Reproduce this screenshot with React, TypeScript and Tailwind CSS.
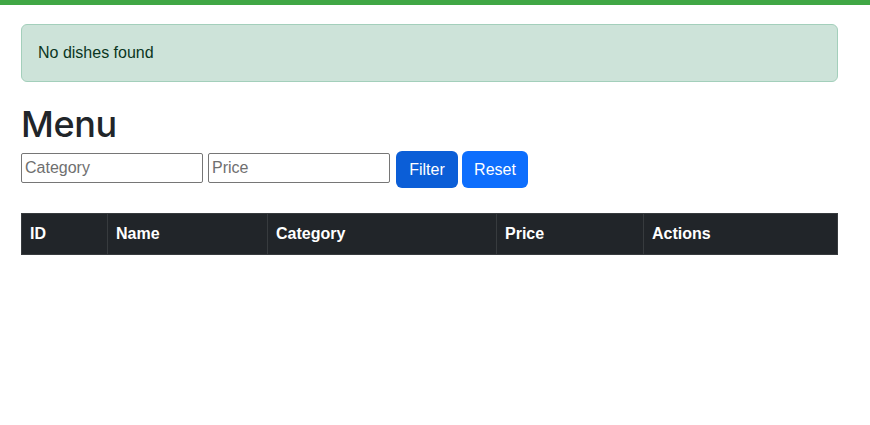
export default function App() {
  const cols = [
    { label: "ID", w: "w-[85px]" },
    { label: "Name", w: "w-[160px]" },
    { label: "Category", w: "w-[229px]" },
    { label: "Price", w: "w-[147px]" },
    { label: "Actions", w: "flex-1" },
  ];

  return (
    <div className="min-h-[425px] bg-white text-[#212529] [font-family:'Liberation_Sans',Arial,sans-serif]">
      {/* top strip */}
      <div className="h-[5px] bg-[#40a745]" />

      <div className="w-[817px] ml-[21px] pt-[19px]">
        {/* alert */}
        <div className="h-[58px] rounded-[6px] border border-[#a3cfbb] bg-[#cde3d9] px-4 flex items-center text-[16px] text-[#0a3622]">
          No dishes found
        </div>

        <h1 className="mt-[18px] text-[36px] leading-[48px] font-medium [font-family:Inter,'Liberation_Sans',sans-serif] tracking-[-0.4px]">
          Menu
        </h1>

        {/* filter row */}
        <div className="mt-[3px] flex items-start">
          <input
            placeholder="Category"
            className="mt-[2px] w-[182px] h-[30px] border border-[#767676] rounded-[2px] px-[3px] text-[16px] placeholder:text-[#6f6f6f] outline-none"
          />
          <input
            placeholder="Price"
            className="mt-[2px] ml-[5px] w-[182px] h-[30px] border border-[#767676] rounded-[2px] px-[3px] text-[16px] placeholder:text-[#6f6f6f] outline-none"
          />
          <button className="ml-[6px] h-[37px] w-[62px] rounded-[6px] bg-[#0b5ed7] text-white text-[16px]">
            Filter
          </button>
          <button className="ml-[4px] h-[37px] w-[66px] rounded-[6px] bg-[#0d6efd] text-white text-[16px]">
            Reset
          </button>
        </div>

        {/* table header */}
        <div className="mt-[25px] flex h-[42px] bg-[#212529] border border-[#373b3e] text-white font-bold text-[16px]">
          {cols.map((c, i) => (
            <div
              key={c.label}
              className={`${c.w} flex items-center px-2 ${i > 0 ? "border-l border-[#373b3e]" : ""}`}
            >
              {c.label}
            </div>
          ))}
        </div>
      </div>
    </div>
  );
}
